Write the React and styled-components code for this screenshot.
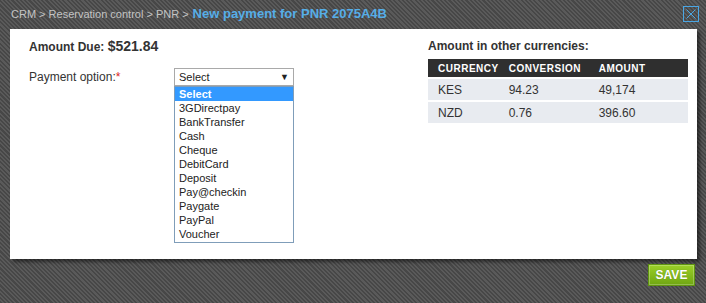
import React, { useState } from 'react';
import styled, { createGlobalStyle } from 'styled-components';

const GlobalStyle = createGlobalStyle`
  html, body { margin: 0; padding: 0; }
  body {
    font-family: "Liberation Sans", Arial, sans-serif;
    background: #4f4f4f;
  }
`;

const Page = styled.div`
  width: 706px;
  height: 303px;
  overflow: hidden;
  background-color: #505050;
  background-image: repeating-linear-gradient(45deg, #474747 0 1.5px, #5a5a5a 1.5px 3px);
  display: flex;
  flex-direction: column;
`;

const TopBar = styled.div`
  height: 29px;
  display: flex;
  align-items: center;
  justify-content: space-between;
  padding: 0 7px 2px 11px;
  box-sizing: border-box;
`;

const Crumbs = styled.div`
  font-size: 11px;
  color: #c4c4c4;
  display: flex;
  align-items: baseline;
  gap: 4px;
`;

const Title = styled.span`
  font-size: 13px;
  font-weight: bold;
  color: #56aee8;
`;

const Close = styled.button`
  width: 16px;
  height: 16px;
  padding: 0;
  border: none;
  background: transparent;
  display: flex;
  cursor: pointer;
`;

const Panel = styled.div`
  margin: 0 9px 0 10px;
  height: 230px;
  background: #fff;
  box-shadow: 3px 3px 3px rgba(0, 0, 0, 0.45);
  display: flex;
  padding: 10px 9px 0 19px;
  box-sizing: border-box;
`;

const Left = styled.div`
  width: 399px;
`;

const Right = styled.div`
  flex: 1;
`;

const Heading = styled.div`
  font-size: 12px;
  font-weight: bold;
  color: #333;
  height: 17px;
  line-height: 17px;
  margin-top: -1px;
`;

const Money = styled.span`
  font-size: 14px;
`;

const FieldRow = styled.div`
  display: flex;
  align-items: center;
  margin-top: 13px;
`;

const Label = styled.label`
  width: 145px;
  font-size: 12px;
  color: #333;
`;

const Req = styled.span`
  color: #d22;
`;

const SelectWrap = styled.div`
  position: relative;
  width: 120px;
`;

const SelectBox = styled.div`
  height: 18px;
  border: 1px solid #a9a9a9;
  box-sizing: border-box;
  display: flex;
  align-items: center;
  justify-content: space-between;
  padding: 0 4px 0 4px;
  font-size: 11px;
  color: #222;
  background: #fff;
`;

const Arrow = styled.span`
  font-size: 9px;
`;

const Options = styled.ul`
  position: absolute;
  top: 18px;
  left: 0;
  width: 120px;
  margin: 0;
  padding: 0 0 1px;
  list-style: none;
  border: 1px solid #7f9db9;
  box-sizing: border-box;
  background: #fff;
`;

const Option = styled.li`
  height: 14px;
  line-height: 14px;
  padding-left: 4px;
  font-size: 11px;
  color: ${p => (p.$active ? '#fff' : '#222')};
  background: ${p => (p.$active ? '#3399ff' : 'transparent')};
  font-weight: ${p => (p.$active ? 'bold' : 'normal')};
`;

const Table = styled.table`
  margin-top: 2px;
  width: 260px;
  border-collapse: separate;
  border-spacing: 0 2px;
  font-size: 12px;
`;

const Th = styled.th`
  background: #2f2f2f;
  color: #fff;
  font-size: 10px;
  font-weight: bold;
  letter-spacing: 0.5px;
  text-align: left;
  height: 18px;
  padding: 0 0 0 ${p => p.$pl || 10}px;
  width: ${p => p.$w}px;
`;

const Td = styled.td`
  background: #e8ebf0;
  color: #333;
  height: 21px;
  padding: 0 0 0 ${p => p.$pl || 10}px;
`;

const Footer = styled.div`
  display: flex;
  justify-content: flex-end;
  padding: 5px 11px 0 0;
`;

const Save = styled.button`
  width: 47px;
  height: 22px;
  border: 1px solid #5f9410;
  background: linear-gradient(#9bd028, #6fa612);
  color: #fff;
  font-family: "Liberation Sans", Arial, sans-serif;
  font-size: 12px;
  font-weight: bold;
  padding: 0;
  box-shadow: inset 0 0 0 1px rgba(255, 255, 255, 0.25);
  text-shadow: 0 0 1px rgba(0, 0, 0, 0.3);
  cursor: pointer;
`;

const options = ['Select', '3GDirectpay', 'BankTransfer', 'Cash', 'Cheque', 'DebitCard', 'Deposit', 'Pay@checkin', 'Paygate', 'PayPal', 'Voucher'];

const rates = [
  { code: 'KES', rate: '94.23', amount: '49,174' },
  { code: 'NZD', rate: '0.76', amount: '396.60' },
];

export default function App() {
  const [selected] = useState('Select');
  return (
    <Page>
      <GlobalStyle />
      <TopBar>
        <Crumbs>
          <span>CRM &gt; Reservation control &gt; PNR &gt;</span>
          <Title>New payment for PNR 2075A4B</Title>
        </Crumbs>
        <Close type="button" aria-label="close">
          <svg width="16" height="16" viewBox="0 0 16 16">
            <rect x="0.5" y="0.5" width="15" height="15" fill="none" stroke="#4aa6e4" strokeWidth="1" />
            <path d="M3.5 3.5 L12.5 12.5 M12.5 3.5 L3.5 12.5" stroke="#4aa6e4" strokeWidth="1" />
          </svg>
        </Close>
      </TopBar>
      <Panel>
        <Left>
          <Heading>Amount Due: <Money>$521.84</Money></Heading>
          <FieldRow>
            <Label>Payment option:<Req>*</Req></Label>
            <SelectWrap>
              <SelectBox>
                <span>{selected}</span>
                <Arrow>▼</Arrow>
              </SelectBox>
              <Options>
                {options.map(o => (
                  <Option key={o} $active={o === selected}>{o}</Option>
                ))}
              </Options>
            </SelectWrap>
          </FieldRow>
        </Left>
        <Right>
          <Heading>Amount in other currencies:</Heading>
          <Table>
            <thead>
              <tr>
                <Th $w={60}>CURRENCY</Th>
                <Th $w={80} $pl={10}>CONVERSION</Th>
                <Th $pl={10}>AMOUNT</Th>
              </tr>
            </thead>
            <tbody>
              {rates.map(r => (
                <tr key={r.code}>
                  <Td>{r.code}</Td>
                  <Td>{r.rate}</Td>
                  <Td>{r.amount}</Td>
                </tr>
              ))}
            </tbody>
          </Table>
        </Right>
      </Panel>
      <Footer>
        <Save type="button">SAVE</Save>
      </Footer>
    </Page>
  );
}
